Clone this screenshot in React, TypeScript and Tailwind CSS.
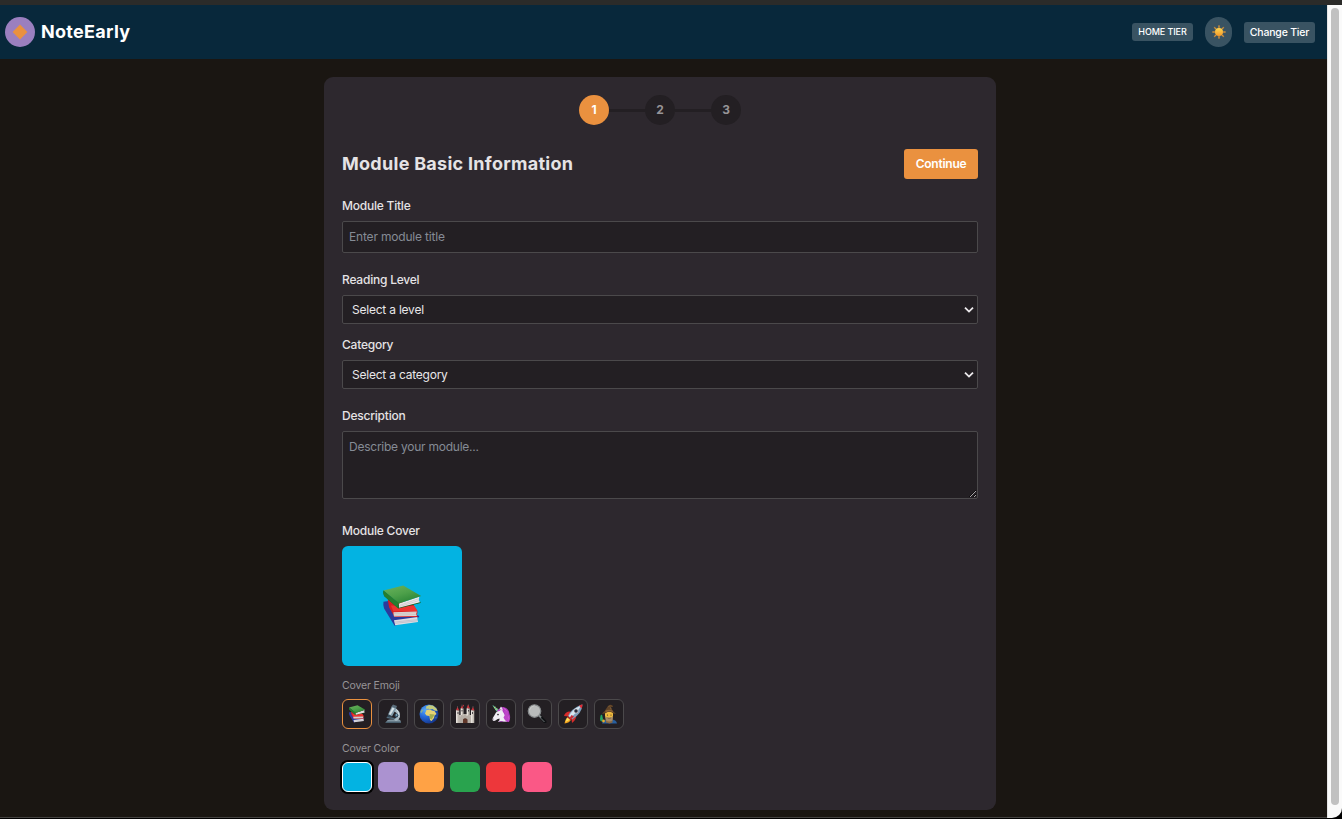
import React, { useState } from "react";

function Books() {
  return (
    <svg viewBox="0 0 64 68" className="h-full w-full">
      <defs>
        <linearGradient id="bookGreen" x1="0" y1="0" x2="0.6" y2="1">
          <stop offset="0" stopColor="#6cb35c" />
          <stop offset="0.55" stopColor="#4da04a" />
          <stop offset="1" stopColor="#2b8536" />
        </linearGradient>
      </defs>
      <path d="M2 27 L10 26 L22 52 L58 49 L60 51 L58 53 L20 66 L3 38 Q1 32 2 27Z" fill="#2c3a9c" />
      <path d="M19 57 L57 52 Q56 56 58 60 L21 65Z" fill="#dedde2" />
      <path d="M20 60 L57 56 M21 62 L57 58" stroke="#a9a6b8" strokeWidth="0.8" />
      <path d="M9 24 L50 31 L57 42 L57 44 L56 50 L58 52 L20 52 L11 36Z" fill="#d51e22" />
      <path d="M14 33 L52 34 L57 42 L18 43Z" fill="#ec3430" />
      <path d="M18 44 L56 43 Q54 47 56 50 L19 51Z" fill="#e0dad9" />
      <path d="M19 46 L55 45 M19 49 L55 48" stroke="#b5a9a7" strokeWidth="0.8" />
      <path d="M2 9 Q1 14 3 18 L26 38 L62 29 L62 27 L27 32Z" fill="#12601f" />
      <path d="M27 30 L60 19 Q58 24 61 28 L27 37Z" fill="#ece8ea" />
      <path d="M28 33 L60 22 M28 35 L60 25" stroke="#b8b6b7" strokeWidth="0.8" />
      <path d="M2 9 L34 1 L63 18 L27 30Z" fill="url(#bookGreen)" />
      <path d="M2 9 L27 29 Q24 33 26 38 L3 18 Q1 14 2 9Z" fill="#257e30" />
    </svg>
  );
}

function Microscope() {
  return (
    <svg viewBox="0 0 40 40" className="h-full w-full">
      <path d="M7 35 Q8 31 14 31 H32 Q36 32 36 37 H5Z" fill="#8397a2" />
      <path d="M6 35 H36 V38 H5Z" fill="#4a606e" />
      <path d="M25 9 Q36 14 34 26 Q32 32 26 34 L21 31 Q29 27 28 21 Q27 16 22 15Z" fill="#a8bac3" />
      <path d="M27 11 Q33 16 31 26" fill="none" stroke="#d6e2e8" strokeWidth="2" />
      <path d="M8 25 L24 28 L23 31 L7 28Z" fill="#526b7b" />
      <path d="M18 4 L27 8 L18 25 L10 21Z" fill="#839caa" />
      <path d="M19 7 L23 9 L15 22 L12 20Z" fill="#d5e0e5" />
      <path d="M20 1 L28 4 L26 9 L17 5Z" fill="#5a6d7b" />
      <path d="M10 21 L17 24 L14 27 L9 25Z" fill="#334856" />
      <circle cx="27" cy="23" r="4" fill="#344d61" />
      <circle cx="27" cy="22" r="1.8" fill="#81a9ba" />
    </svg>
  );
}

function Globe() {
  return (
    <svg viewBox="0 0 40 40" className="h-full w-full">
      <defs>
        <radialGradient id="ocean" cx="0.3" cy="0.3" r="0.8">
          <stop offset="0" stopColor="#58aafa" />
          <stop offset="0.45" stopColor="#2568d8" />
          <stop offset="1" stopColor="#123084" />
        </radialGradient>
      </defs>
      <circle cx="20" cy="20" r="19" fill="url(#ocean)" />
      <path d="M14 5 L20 2 L28 3 L35 9 L37 14 L31 13 L27 10 L22 11 L18 9 L15 11Z" fill="#c3cb7d" />
      <path d="M15 12 L21 11 L26 13 L31 14 L35 20 L31 23 L30 28 L25 34 L22 32 L21 24 L15 23 L12 19Z" fill="#e6d274" />
      <path d="M21 20 L31 21 L29 25 L25 31 L22 29Z" fill="#a3ad50" />
      <path d="M3 15 L7 10 L8 13 L4 19Z M33 27 L35 25 L34 30Z" fill="#8bb08d" />
    </svg>
  );
}

function Castle() {
  return (
    <svg viewBox="0 0 40 40" className="h-full w-full">
      <path d="M5 8 V4 M14 6 V1 M27 6 V1 M36 8 V4" stroke="#777" strokeWidth="1" />
      <path d="M1.5 13 L5 6 L8.5 13Z M15 4 L18 1 V5Z M23 9 L26 1 L30 9Z M32 13 L36 6 L39 13Z M11 9 L14 3 L17 9Z" fill="#c9353d" />
      <path d="M2 13 H8.5 V22 H11.5 V9 H17 V20 H23.5 V9 H29.5 V22 H32 V13 H38.5 V38 H2Z" fill="#c0bab2" />
      <path d="M2 13 H5 V38 H2Z M11.5 9 H14 V28 H11.5Z M23.5 9 H26 V28 H23.5Z M32 13 H35 V38 H32Z" fill="#e6e2dc" />
      <path d="M9 25 H12 V22 H15 V24 H18 V20 H22 V24 H25 V22 H29 V25 H32 V38 H9Z" fill="#b5aea6" />
      <path d="M16 38 V31 Q20 26 25 31 V38Z" fill="#553126" />
      <path d="M18 31 V38 M22 31 V38" stroke="#85513a" strokeWidth="1" />
      <path d="M6 16 V20 M14 12 V15 M27 12 V15 M35 16 V20" stroke="#4c474b" strokeWidth="2" />
    </svg>
  );
}

function Unicorn() {
  return (
    <svg viewBox="0 0 40 40" className="h-full w-full">
      <path d="M17 9 Q21 4 28 7 Q36 10 37 20 Q40 27 36 36 L24 34 L20 18Z" fill="#ae36bd" />
      <path d="M25 8 Q34 13 33 22 Q37 28 35 34" fill="none" stroke="#dc77dc" strokeWidth="2" />
      <path d="M11 15 L3 3 Q4 2 6 4 L16 12Z" fill="#66bd9b" />
      <path d="M6 8 L9 6 M9 12 L12 9" stroke="#eee46f" strokeWidth="1.5" />
      <path d="M16 12 L20 5 Q24 9 23 14 Q29 22 32 35 L14 36 Q18 32 17 29 Q12 30 9 33 Q5 35 3 32 Q2 29 6 24 L10 17Z" fill="#f0edf4" />
      <path d="M18 12 L20 8 L22 13Z" fill="#dab8d2" />
      <path d="M12 15 Q13 9 20 11 Q18 15 12 15Z M23 12 Q31 19 25 27 Q27 32 31 35 L36 35 L34 15Z" fill="#bd46c8" />
      <circle cx="14" cy="21" r="1.7" fill="#2c2530" />
      <circle cx="5" cy="30" r="1" fill="#8e7c92" />
      <path d="M15 36 Q20 32 26 36Z" fill="#8b3d9f" />
    </svg>
  );
}

function Magnifier() {
  return (
    <svg viewBox="0 0 40 40" className="h-full w-full">
      <path d="M22 24 L26 20 L38 33 Q41 37 37 38 Q34 39 31 35Z" fill="#101214" />
      <path d="M27 28 L35 36" stroke="#6d7376" strokeWidth="2" />
      <path d="M23 22 L28 27" stroke="#858a8c" strokeWidth="4" />
      <circle cx="15" cy="14" r="12.5" fill="#b9bbbb" stroke="#85898b" strokeWidth="2.5" />
      <path d="M5 12 Q7 4 15 3" fill="none" stroke="#d0d0cf" strokeWidth="1.5" />
    </svg>
  );
}

function Rocket() {
  return (
    <svg viewBox="0 0 40 40" className="h-full w-full">
      <path d="M2 24 Q4 16 12 15 L21 16 L11 25Z M17 29 L26 20 Q28 31 18 38Z" fill="#d52b2b" />
      <path d="M11 24 L17 30 Q13 38 3 39 Q4 31 11 24Z" fill="#f1a21c" />
      <path d="M8 27 L15 30 Q11 34 5 36Z" fill="#ffe05d" />
      <path d="M10 24 Q16 10 35 2 L39 1 Q38 19 18 31Z" fill="#7fa0bd" />
      <path d="M12 24 Q18 11 36 3 Q29 17 15 27Z" fill="#d7e6f0" />
      <path d="M32 3 Q37 1 39 1 Q39 5 37 9Z" fill="#e22b35" />
      <path d="M22 10 L30 18" stroke="#c92c38" strokeWidth="2" />
      <circle cx="26" cy="14" r="4.8" fill="#d6d9dd" />
      <circle cx="26" cy="14" r="3.5" fill="#282c3b" />
      <path d="M10 24 L18 31 L16 33 L8 26Z" fill="#a42025" />
      <path d="M17 22 L22 25 L16 31 L13 28Z" fill="#c92e37" />
    </svg>
  );
}

function Mage() {
  return (
    <svg viewBox="0 0 40 40" className="h-full w-full">
      <path d="M6 39 Q7 32 15 31 L26 31 Q35 32 36 39Z" fill="#275f9f" />
      <path d="M13 28 H27 V37 L21 39 L14 37Z" fill="#8b6942" />
      <path d="M12 17 Q20 13 28 17 V24 Q27 31 20 32 Q13 30 12 24Z" fill="#eeb93e" />
      <path d="M12 25 Q20 29 28 25 L27 33 Q20 37 14 33Z" fill="#a68b67" />
      <path d="M6 19 Q12 15 14 10 L18 4 Q23 0 27 3 L28 6 L24 6 L27 13 Q30 17 34 19 Q28 20 26 17 Q20 14 14 18 Q9 20 6 19Z" fill="#604327" />
      <path d="M13 13 Q20 10 27 13 L28 16 Q20 13 13 17Z" fill="#8c6337" />
      <path d="M19 6 L22 3 M23 7 L24 11" stroke="#8c6b42" strokeWidth="1.3" />
      <circle cx="17" cy="22" r="1.2" fill="#473524" />
      <circle cx="24" cy="22" r="1.2" fill="#473524" />
      <path d="M17 28 Q20 30 24 28" fill="none" stroke="#6a4c34" strokeWidth="1.2" />
      <path d="M2 30 L3 23 L6 21 L8 30 L6 35 L3 34Z" fill="#24a865" />
      <circle cx="9" cy="34" r="2.8" fill="#e5ad2d" />
    </svg>
  );
}

function Sun() {
  return (
    <svg viewBox="0 0 28 28" className="size-[14px]">
      <defs>
        <linearGradient id="sunFill" x1="0" y1="0" x2="0" y2="1">
          <stop offset="0" stopColor="#fed84f" />
          <stop offset="1" stopColor="#f69a2b" />
        </linearGradient>
      </defs>
      <path d="M14 0 L15.5 5 H12.5Z M14 28 L12.5 23 H15.5Z M0 14 L5 12.5 V15.5Z M28 14 L23 15.5 V12.5Z M4 4 L8.5 6.5 L6.5 8.5Z M24 4 L21.5 8.5 L19.5 6.5Z M4 24 L6.5 19.5 L8.5 21.5Z M24 24 L19.5 21.5 L21.5 19.5Z" fill="#ec9a35" stroke="#ec9a35" strokeWidth="0.7" />
      <circle cx="14" cy="14" r="8" fill="url(#sunFill)" />
    </svg>
  );
}

const emojis = [
  { name: "Books", Icon: Books },
  { name: "Microscope", Icon: Microscope },
  { name: "Globe", Icon: Globe },
  { name: "Castle", Icon: Castle },
  { name: "Unicorn", Icon: Unicorn },
  { name: "Magnifier", Icon: Magnifier },
  { name: "Rocket", Icon: Rocket },
  { name: "Mage", Icon: Mage },
];

const colors = [
  "bg-[#03b3e2]",
  "bg-[#ab92d0]",
  "bg-[#ffa245]",
  "bg-[#29a34e]",
  "bg-[#ed373b]",
  "bg-[#fa5886]",
];

function Label({ children }: { children: React.ReactNode }) {
  return <div className="mb-1.5 h-[18px] text-[12px] leading-[18px] font-medium tracking-[-0.22px] text-[#e5e3e5]">{children}</div>;
}

function SelectBox({ text }: { text: string }) {
  return (
    <button className="flex h-[29px] w-full items-center justify-between rounded-[2px] border border-[#4b494b] bg-[#231f23] pr-[3px] pl-[9px] text-[12px] tracking-[-0.22px] text-[#e9e7e9]">
      <span>{text}</span>
      <svg viewBox="0 0 10 8" className="h-2 w-2.5">
        <path d="M1 1.6 L5 5.6 L9 1.6" fill="none" stroke="#eceaec" strokeWidth="1.8" />
      </svg>
    </button>
  );
}

function Step({ n, active = false }: { n: number; active?: boolean }) {
  return (
    <div className={`flex size-[30px] items-center justify-center rounded-full text-[12px] font-bold ${active ? "bg-[#ea913f] text-white" : "bg-[#231f23] text-[#979497]"}`}>
      {n}
    </div>
  );
}

export default function App() {
  const [emoji, setEmoji] = useState(0);
  const [color, setColor] = useState(0);
  const Cover = emojis[emoji].Icon;

  return (
    <div className="flex h-[819px] w-[1342px] flex-col overflow-hidden bg-black font-['Inter',sans-serif]">
      <div className="h-[5px] shrink-0 bg-[#2b2b29]" />
      <div className="flex h-[813px] shrink-0 overflow-hidden rounded-br-[10px]">
        <div className="flex w-[1327px] flex-col border-b border-[#454341] bg-[#1a1612]">
          <header className="flex h-[54px] shrink-0 items-center justify-between bg-[#08283b] pr-3 pl-[5px]">
            <div className="flex items-center gap-1.5">
              <div className="flex size-[30px] items-center justify-center rounded-full bg-[#9b7fbf]">
                <svg viewBox="0 0 16 16" className="size-4">
                  <path d="M8 .6 L15.4 8 L8 15.4 L.6 8Z" fill="#ea913f" />
                </svg>
              </div>
              <span className="pb-0.5 text-[18px] leading-[27px] font-bold tracking-[0.3px] text-white">NoteEarly</span>
            </div>
            <div className="flex items-center">
              <span className="flex h-[18px] w-[61px] items-center justify-center rounded-[3px] bg-[#395362] text-[9px] font-medium tracking-[-0.1px] whitespace-nowrap text-white">HOME TIER</span>
              <button aria-label="Theme" className="ml-3 flex h-[30px] w-[27px] items-center justify-center rounded-full bg-[#395362]">
                <Sun />
              </button>
              <button className="ml-3 flex h-[21px] w-[71px] items-center justify-center rounded-[3px] bg-[#395362] pt-px text-[10.5px] font-medium tracking-[-0.2px] whitespace-nowrap text-white">Change Tier</button>
            </div>
          </header>

          <main className="mt-[18px] ml-[324px] h-[733px] w-[672px] shrink-0 rounded-[9px] bg-[#2d282e] p-[18px]">
            <div className="flex items-center justify-center">
              <Step n={1} active />
              <div className="h-[3px] w-9 bg-[#231f23]" />
              <Step n={2} />
              <div className="h-[3px] w-9 bg-[#231f23]" />
              <Step n={3} />
            </div>

            <div className="mt-6 flex h-[30px] items-center justify-between">
              <h1 className="pb-0.5 text-[18px] font-bold tracking-[0.28px] text-[#e5e3e5]">Module Basic Information</h1>
              <button className="h-[30px] w-[74px] rounded-[3px] bg-[#ea913f] text-[12px] font-semibold tracking-[-0.25px] text-white">Continue</button>
            </div>

            <div className="mt-[18px]">
              <Label>Module Title</Label>
              <input placeholder="Enter module title" className="block h-8 w-full rounded-[2px] border border-[#4b494b] bg-[#231f23] px-1.5 pb-0.5 text-[12px] tracking-[-0.18px] text-[#e5e3e5] placeholder:text-[#858b95]" />
            </div>
            <div className="mt-[18px]">
              <Label>Reading Level</Label>
              <SelectBox text="Select a level" />
            </div>
            <div className="mt-3">
              <Label>Category</Label>
              <SelectBox text="Select a category" />
            </div>
            <div className="mt-[18px]">
              <Label>Description</Label>
              <textarea placeholder="Describe your module..." className="block h-[68px] w-full resize rounded-[2px] border border-[#4b494b] bg-[#231f23] px-1.5 py-1.5 text-[12px] leading-[18px] tracking-[-0.24px] text-[#e5e3e5] placeholder:text-[#858b95]" />
            </div>
            <div className="mt-[23px]">
              <Label>Module Cover</Label>
              <div className={`flex size-[120px] items-center justify-center rounded-[6px] ${colors[color]}`}>
                <div className="h-[42px] w-10"><Cover /></div>
              </div>
            </div>

            <div className="mt-3 mb-1.5 h-[15px] text-[10.5px] leading-[15px] tracking-[-0.15px] text-[#979497]">Cover Emoji</div>
            <div className="flex gap-1.5">
              {emojis.map(({ name, Icon }, i) => (
                <button key={name} aria-label={name} onClick={() => setEmoji(i)} className={`flex size-[30px] items-center justify-center rounded-[6px] border bg-[#231f23] ${i === emoji ? "border-[#ea913f]" : "border-[#4b494b]"}`}>
                  <span className={`block ${i === 0 ? "size-[18px]" : "size-5"}`}><Icon /></span>
                </button>
              ))}
            </div>
            <div className="mt-3 mb-1.5 h-[15px] text-[10.5px] leading-[15px] tracking-[-0.15px] text-[#979497]">Cover Color</div>
            <div className="flex gap-1.5">
              {colors.map((c, i) => (
                <button key={c} aria-label={`Color ${i + 1}`} onClick={() => setColor(i)} className={`size-[30px] rounded-[6px] ${c} ${i === color ? "border border-white ring-2 ring-black" : ""}`} />
              ))}
            </div>
          </main>
        </div>
        <div className="flex w-[15px] justify-center border-l border-[#e5e5e5] bg-[#fafafa] pt-[3px]">
          <div className="h-[797px] w-2 rounded-full bg-[#c1c1c1]" />
        </div>
      </div>
    </div>
  );
}
